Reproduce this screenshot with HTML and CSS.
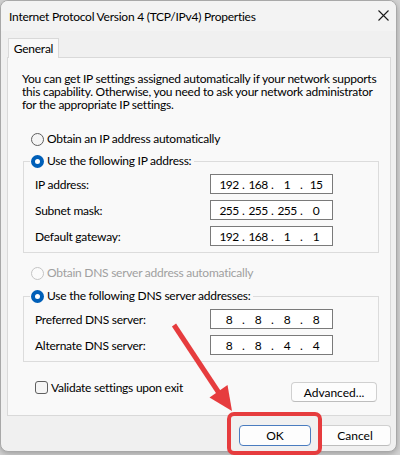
FILE: index.html
```html
<!DOCTYPE html>
<html lang="en">
<head>
    <meta charset="UTF-8">
    <meta name="viewport" content="width=device-width, initial-scale=1.0">
    <title>Internet Protocol Version 4 (TCP/IPv4) Properties</title>
    <link rel="stylesheet" href="styles.css">
</head>
<body>
    <div class="dialog">
        <div class="titlebar">
            <span class="title">Internet Protocol Version 4 (TCP/IPv4) Properties</span>
            <svg class="close" width="11" height="11" viewBox="0 0 11 11">
                <path d="M0.5 0.5 L10.5 10.5 M10.5 0.5 L0.5 10.5" stroke="#1b1b1b" stroke-width="1.1" fill="none"/>
            </svg>
        </div>

        <div class="tabs">
            <div class="tab">General</div>
        </div>

        <div class="panel">
            <p class="intro">You can get IP settings assigned automatically if your network supports<br>this capability. Otherwise, you need to ask your network administrator<br>for the appropriate IP settings.</p>

            <div class="option first"><span class="radio"></span>Obtain an IP address automatically</div>

            <!-- Static IP -->
            <fieldset class="group">
                <legend class="option"><span class="radio checked"></span>Use the following IP address:</legend>
                <div class="row">
                    <span class="label">IP address:</span>
                    <div class="ip-box"><span>192</span><b>.</b><span>168</span><b>.</b><span>1</span><b>.</b><span>15</span></div>
                </div>
                <div class="row">
                    <span class="label">Subnet mask:</span>
                    <div class="ip-box"><span>255</span><b>.</b><span>255</span><b>.</b><span>255</span><b>.</b><span>0</span></div>
                </div>
                <div class="row">
                    <span class="label">Default gateway:</span>
                    <div class="ip-box"><span>192</span><b>.</b><span>168</span><b>.</b><span>1</span><b>.</b><span>1</span></div>
                </div>
            </fieldset>

            <div class="option disabled"><span class="radio"></span>Obtain DNS server address automatically</div>

            <!-- DNS -->
            <fieldset class="group dns">
                <legend class="option"><span class="radio checked"></span>Use the following DNS server addresses:</legend>
                <div class="row">
                    <span class="label">Preferred DNS server:</span>
                    <div class="ip-box"><span>8</span><b>.</b><span>8</span><b>.</b><span>8</span><b>.</b><span>8</span></div>
                </div>
                <div class="row">
                    <span class="label">Alternate DNS server:</span>
                    <div class="ip-box"><span>8</span><b>.</b><span>8</span><b>.</b><span>4</span><b>.</b><span>4</span></div>
                </div>
            </fieldset>

            <div class="panel-foot">
                <div class="check"><span class="box"></span>Validate settings upon exit</div>
                <button class="btn advanced">Advanced...</button>
            </div>
        </div>

        <div class="actions">
            <button class="btn default">OK</button>
            <button class="btn">Cancel</button>
        </div>
    </div>

    <!-- red callout drawn over the screenshot -->
    <svg class="callout" width="400" height="455" viewBox="0 0 400 455">
        <rect x="229" y="414" width="91" height="39" rx="5" fill="none" stroke="#e63c3e" stroke-width="4"/>
        <line x1="174" y1="325" x2="219" y2="393" stroke="#e63c3e" stroke-width="5"/>
        <polygon points="232,411 209.5,397.5 227.5,385" fill="#e63c3e"/>
    </svg>
</body>
</html>
```

FILE: styles.css
```css
body {
    margin: 0;
    background-color: #d4d4d4;
    font-family: Lato, "Liberation Sans", sans-serif;
    font-size: 12px;
    letter-spacing: -0.25px;
    color: #000;
    position: relative;
    width: 400px;
    height: 455px;
    overflow: hidden;
}

.dialog {
    width: 397px;
    height: 452px;
    box-sizing: border-box;
    background-color: #f0f0f0;
    border: 1px solid #a8a8a8;
    border-radius: 8px;
    box-shadow: 0 2px 6px rgba(0, 0, 0, 0.25);
    overflow: hidden;
}

.titlebar {
    height: 30px;
    display: flex;
    align-items: center;
    justify-content: space-between;
    padding: 0 7px 0 8px;
    background-color: #f3f3f3;
}

.close {
    display: block;
    margin-top: -1px;
}

.tabs {
    margin-top: 7px;
    padding-left: 7px;
    display: flex;
}

.tab {
    position: relative;
    z-index: 1;
    width: 51px;
    height: 20px;
    box-sizing: border-box;
    line-height: 19px;
    text-align: center;
    background-color: #f9f9f9;
    border: 1px solid #d9d9d9;
    border-bottom: none;
    margin-bottom: -1px;
}

.panel {
    margin: 0 5px 0 6px;
    padding: 14px 11px 13px 14px;
    background-color: #f9f9f9;
    border: 1px solid #d9d9d9;
}

.intro {
    margin: 0;
    line-height: 13px;
    white-space: nowrap;
}

.option {
    display: flex;
    align-items: center;
    height: 16px;
    line-height: 16px;
}

.option.first {
    margin: 20px 0 0 9px;
}

.option.disabled {
    margin: 12px 0 0 9px;
    color: #a0a0a0;
}

.radio {
    width: 13px;
    height: 13px;
    box-sizing: border-box;
    border: 1px solid #5f5f5f;
    border-radius: 50%;
    background-color: #f5f5f5;
    margin-right: 3px;
}

.disabled .radio {
    border-color: #c4c4c4;
    background-color: #fbfbfb;
}

.radio.checked {
    border: 4px solid #005fb8;
    background-color: #fff;
}

.group {
    margin: 6px 0 0 1px;
    padding: 2px 0 3px 0;
    border: 1px solid #dcdcdc;
    min-width: 0;
}

.group.dns {
    margin-top: 7px;
}

.group legend {
    margin-left: 6px;
    padding: 0 3px 0 1px;
}

.row {
    display: flex;
    align-items: center;
    height: 26px;
    padding: 0 45px 0 11px;
}

.label {
    flex: 1;
}

.ip-box {
    width: 123px;
    height: 20px;
    box-sizing: border-box;
    display: flex;
    align-items: center;
    padding-left: 7px;
    background-color: #fff;
    border: 1px solid #7a7a7a;
}

.ip-box span {
    flex: 0 0 22px;
    text-align: center;
    letter-spacing: -0.6px;
}

.ip-box b {
    flex: 0 0 7px;
    text-align: center;
    font-weight: normal;
    letter-spacing: 0;
}

.panel-foot {
    display: flex;
    justify-content: space-between;
    align-items: flex-start;
    padding: 17px 2px 0 13px;
}

.check {
    display: flex;
    align-items: center;
    height: 16px;
}

.check .box {
    width: 13px;
    height: 13px;
    box-sizing: border-box;
    border: 1px solid #5f5f5f;
    border-radius: 3px;
    background-color: #f5f5f5;
    margin-right: 3px;
}

.btn {
    font-family: Lato, "Liberation Sans", sans-serif;
    font-size: 12px;
    color: #000;
    height: 20px;
    padding: 0;
    background-color: #fdfdfd;
    border: 1px solid #d0d0d0;
    border-bottom-color: #bdbdbd;
    border-radius: 4px;
}

.btn.advanced {
    width: 86px;
    margin-top: 3px;
}

.actions {
    display: flex;
    justify-content: flex-end;
    gap: 8px;
    padding: 9px 5px 0 0;
}

.actions .btn {
    width: 72px;
    height: 21px;
}

.btn.default {
    border-color: #4a7cbf;
}

.callout {
    position: absolute;
    top: 0;
    left: 0;
}
```
